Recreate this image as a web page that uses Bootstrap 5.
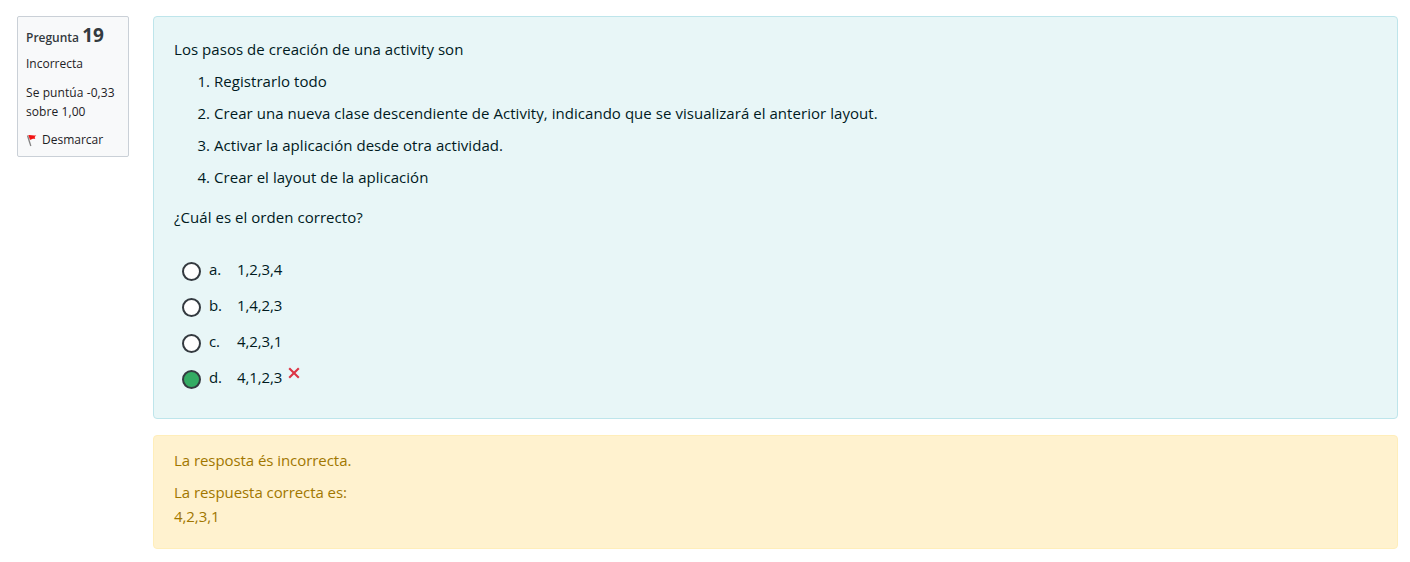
<!DOCTYPE html>
<html lang="es">
<head>
<meta charset="utf-8">
<meta name="viewport" content="width=device-width, initial-scale=1">
<title>Pregunta 19</title>
<link href="https://cdn.jsdelivr.net/npm/bootstrap@5.3.0/dist/css/bootstrap.min.css" rel="stylesheet">
<style>
body{font-family:"Open Sans","Noto Sans",sans-serif;font-size:15px;line-height:24px;color:#001a1e;background:#fff}
.question{padding:16px 12px 0 17px;gap:24px}
.q-info{width:112px;height:141px;background:#f8f9fa;border:1px solid #cad0d7;border-radius:2px;padding:8px 8px 0;font-size:12px;line-height:19px;color:#1d2125}
.q-info h3{font-size:12px;font-weight:600;line-height:22px;margin:0 0 5px;color:#343a40}
.q-info h3 span{font-size:19px;font-weight:700;line-height:20px}
.q-info .state{margin-bottom:10px}
.q-info .grade{margin-bottom:9px;letter-spacing:.08px;white-space:nowrap}
.formulation{height:403px;background:#e8f6f7;border:1px solid #bee5eb;border-radius:4px;padding:20px;letter-spacing:.048px}
.steps{padding-left:40px}
.steps li{margin-bottom:8px}
.answer{padding:24px 0 0 8px;letter-spacing:-.1px}
.choice{height:36px;padding-top:4px}
.choice .form-check-input{width:19px;height:19px;margin:5px 8px 0 0;border:2px solid #343a40;background:#fff}
.choice .form-check-input:checked{background:#34ab63;border-color:#343a40}
.letter{width:28px}
.cross{width:12px;height:12px;margin:2px 0 0 6px}
.outcome{height:114px;background:#fff2cf;border:1px solid #ffeeba;border-radius:4px;padding:12px 20px;color:#a17700;letter-spacing:-.06px}
</style>
</head>
<body>
<main class="question d-flex align-items-start">
  <aside class="q-info flex-shrink-0">
    <h3>Pregunta <span>19</span></h3>
    <div class="state">Incorrecta</div>
    <div class="grade">Se puntúa -0,33<br>sobre 1,00</div>
    <div class="d-flex align-items-center"><svg width="16" height="16" viewBox="0 0 16 16" class="flex-shrink-0"><path d="M1.5 3.5 4.8 14" stroke="#858585" stroke-width="1.3" fill="none"/><path d="M2.3 3c3-.2 5 .8 8 .2L8.7 5l.5 2C7 6.4 5.6 7.4 4 8z" fill="#f21313"/></svg><span>Desmarcar</span></div>
  </aside>
  <div class="flex-grow-1">
    <section class="formulation mb-3">
      <p class="mb-2">Los pasos de creación de una activity son</p>
      <ol class="steps mb-3">
        <li>Registrarlo todo</li>
        <li>Crear una nueva clase descendiente de Activity, indicando que se visualizará el anterior layout.</li>
        <li>Activar la aplicación desde otra actividad.</li>
        <li>Crear el layout de la aplicación</li>
      </ol>
      <p class="mb-0">¿Cuál es el orden correcto?</p>
      <div class="answer">
        <label class="choice d-flex align-items-start"><input class="form-check-input" type="radio" name="r"><span class="letter">a.</span><span>1,2,3,4</span></label>
        <label class="choice d-flex align-items-start"><input class="form-check-input" type="radio" name="r"><span class="letter">b.</span><span>1,4,2,3</span></label>
        <label class="choice d-flex align-items-start"><input class="form-check-input" type="radio" name="r"><span class="letter">c.</span><span>4,2,3,1</span></label>
        <label class="choice d-flex align-items-start"><input class="form-check-input" type="radio" name="r" checked><span class="letter">d.</span><span>4,1,2,3</span><svg class="cross" viewBox="0 0 12 12"><path d="M1.2 1.2l9.6 9.6M10.8 1.2l-9.6 9.6" stroke="#dc3545" stroke-width="2.1"/></svg></label>
      </div>
    </section>
    <section class="outcome">
      <p class="mb-2">La resposta és incorrecta.</p>
      <div>La respuesta correcta es:<br>4,2,3,1</div>
    </section>
  </div>
</main>
<script src="https://cdn.jsdelivr.net/npm/bootstrap@5.3.0/dist/js/bootstrap.bundle.min.js"></script>
</body>
</html>
